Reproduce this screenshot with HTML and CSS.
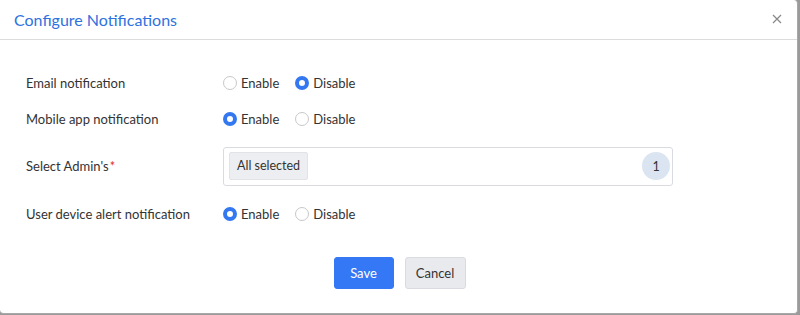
FILE: index.html
```html
<!DOCTYPE html>
<html>
<head>
<meta charset="utf-8">
<link rel="stylesheet" href="styles.css">
</head>
<body>
<div class="dialog">
  <div class="header">
    <h1 class="title">Configure Notifications</h1>
    <span class="close">
      <svg width="10" height="10" viewBox="0 0 10 10"><path d="M1 1L9 9M9 1L1 9" stroke="#888" stroke-width="1.2" fill="none"/></svg>
    </span>
  </div>
  <div class="body">
    <div class="row">
      <div class="label">Email notification</div>
      <div class="radios">
        <label class="radio"><span class="dot"></span>Enable</label>
        <label class="radio"><span class="dot on"></span>Disable</label>
      </div>
    </div>
    <div class="row">
      <div class="label">Mobile app notification</div>
      <div class="radios">
        <label class="radio"><span class="dot on"></span>Enable</label>
        <label class="radio"><span class="dot"></span>Disable</label>
      </div>
    </div>
    <div class="row row-select">
      <div class="label">Select Admin's<span class="req">*</span></div>
      <div class="select">
        <span class="chip">All selected</span>
        <span class="count">1</span>
      </div>
    </div>
    <div class="row">
      <div class="label">User device alert notification</div>
      <div class="radios">
        <label class="radio"><span class="dot on"></span>Enable</label>
        <label class="radio"><span class="dot"></span>Disable</label>
      </div>
    </div>
    <div class="actions">
      <button class="btn primary">Save</button>
      <button class="btn secondary">Cancel</button>
    </div>
  </div>
</div>
</body>
</html>
```
FILE: styles.css
```css
html, body {
  margin: 0;
  padding: 0;
  background: #9a9a9a;
}
body {
  font-family: Lato, "Open Sans", sans-serif;
  color: #333;
  font-size: 13px;
}
.dialog {
  width: 797px;
  height: 313px;
  background: #fff;
  border: 1px solid #a8a8a8;
  border-top: none;
  border-left: none;
  border-radius: 0 4px 4px 4px;
  overflow: hidden;
}
.header {
  height: 39px;
  border-bottom: 1px solid #dcdcdc;
  display: flex;
  align-items: center;
  justify-content: space-between;
  padding: 0 15px 0 14px;
}
.title {
  margin: 0;
  font-size: 16px;
  font-weight: 400;
  color: #2e72e0;
  padding-bottom: 1px;
}
.close {
  display: flex;
  align-items: center;
  margin-top: -1px;
}
.body {
  padding: 25px 26px 0 26px;
}
.row {
  display: flex;
  align-items: center;
  height: 36px;
}
.row-select {
  height: 58px;
  margin-bottom: 1px;
}
.label {
  width: 197px;
  color: #333;
}
.req {
  color: #e0312b;
  margin-left: 1px;
}
.radios {
  display: flex;
  gap: 16px;
}
.radio {
  display: flex;
  align-items: center;
  color: #333;
}
.dot {
  box-sizing: border-box;
  width: 14px;
  height: 14px;
  border-radius: 50%;
  border: 1px solid #c8c8c8;
  background: #fff;
  margin-right: 4px;
}
.dot.on {
  border: 4px solid #3378f1;
  background: #fff;
}
.select {
  box-sizing: border-box;
  width: 450px;
  height: 39px;
  border: 1px solid #d9dbe0;
  border-radius: 3px;
  display: flex;
  align-items: center;
  justify-content: space-between;
  padding: 0 2px 0 5px;
}
.chip {
  background: #eceef1;
  border: 1px solid #e1e3e7;
  border-radius: 2px;
  padding: 0 7px;
  height: 26px;
  line-height: 26px;
  font-size: 12.5px;
}
.count {
  width: 28px;
  height: 28px;
  border-radius: 50%;
  background: #dbe5f1;
  display: flex;
  align-items: center;
  justify-content: center;
  font-size: 12.5px;
}
.actions {
  display: flex;
  justify-content: center;
  gap: 11px;
  margin-top: 25px;
  padding-left: 2px;
}
.btn {
  font-family: Lato, sans-serif;
  font-size: 13px;
  height: 32px;
  border-radius: 3px;
  padding: 0;
  cursor: pointer;
}
.primary {
  width: 60px;
  background: #3478f6;
  color: #fff;
  border: 1px solid #3478f6;
}
.secondary {
  width: 61px;
  background: #e9eaee;
  color: #333;
  border: 1px solid #dadbe0;
}
```
